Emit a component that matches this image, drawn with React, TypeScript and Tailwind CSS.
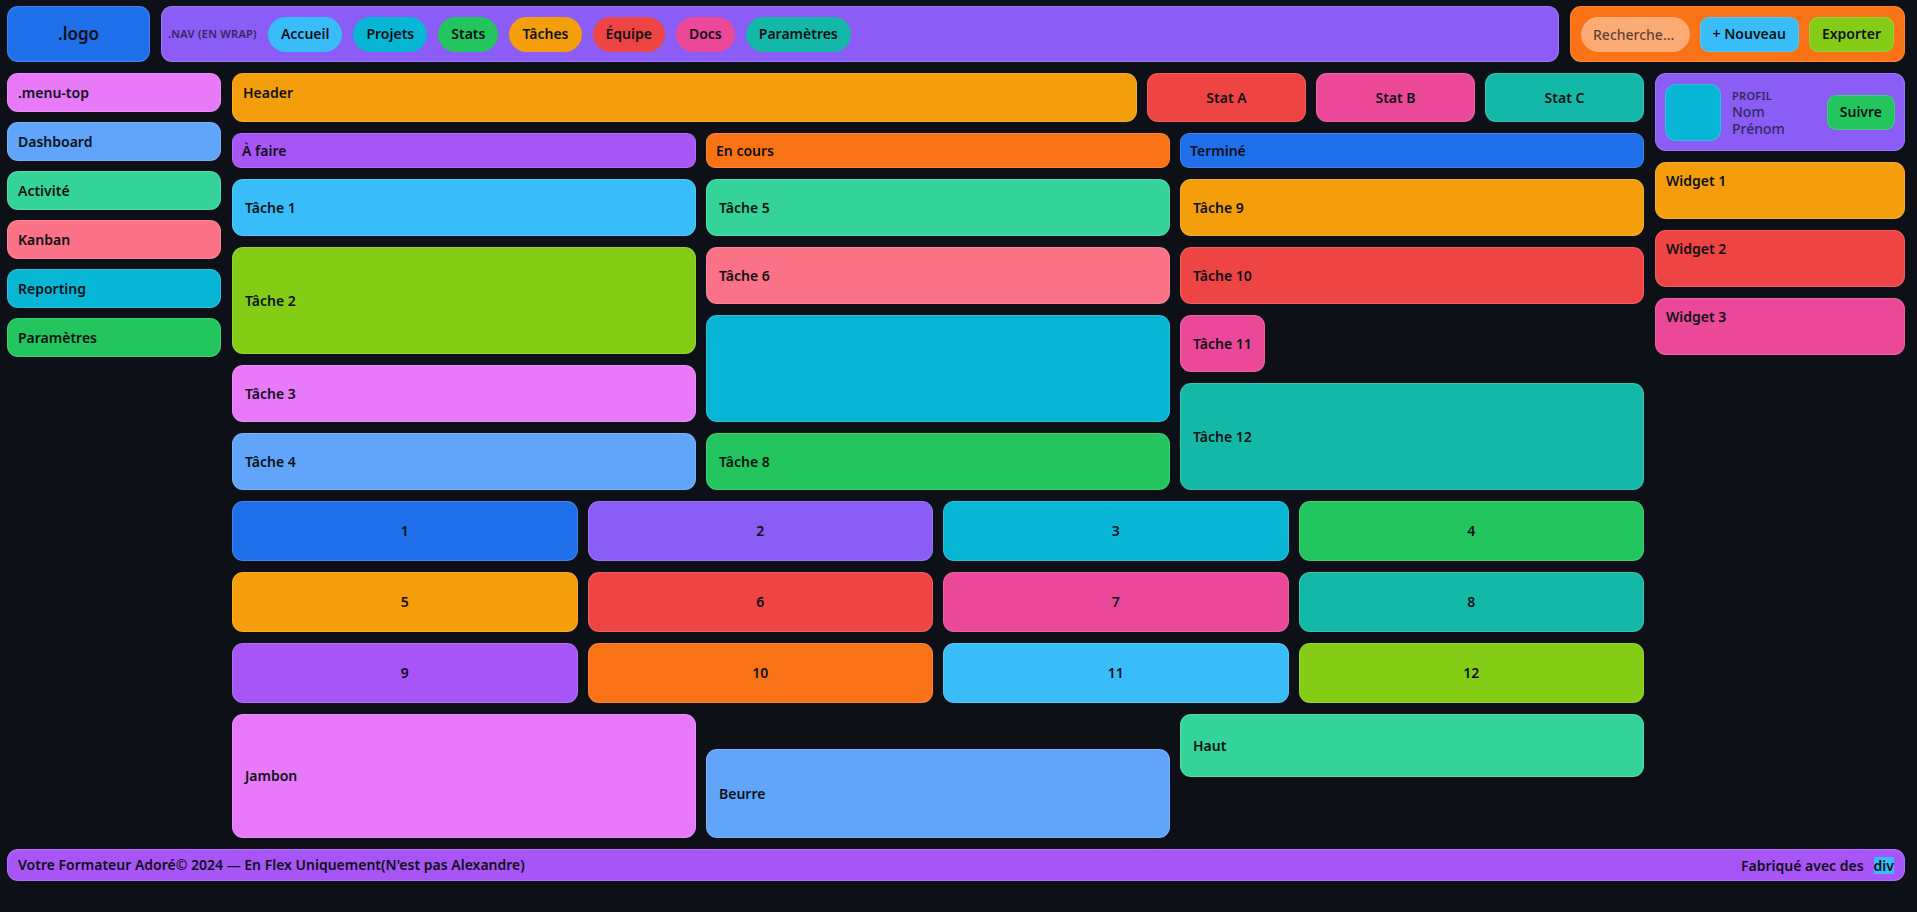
const BOX = 'rounded-[11px] border border-white/15';

const NAV_LINKS = [
  { label: 'Accueil', color: 'bg-[#38bdf8]' },
  { label: 'Projets', color: 'bg-[#06b6d4]' },
  { label: 'Stats', color: 'bg-[#22c55e]' },
  { label: 'Tâches', color: 'bg-[#f59e0b]' },
  { label: 'Équipe', color: 'bg-[#ef4444]' },
  { label: 'Docs', color: 'bg-[#ec4899]' },
  { label: 'Paramètres', color: 'bg-[#14b8a6]' },
];

const MENU_LINKS = [
  { label: 'Dashboard', color: 'bg-[#60a5fa]' },
  { label: 'Activité', color: 'bg-[#34d399]' },
  { label: 'Kanban', color: 'bg-[#fb7185]' },
  { label: 'Reporting', color: 'bg-[#06b6d4]' },
  { label: 'Paramètres', color: 'bg-[#22c55e]' },
];

const STATS = [
  { label: 'Stat A', color: 'bg-[#ef4444]' },
  { label: 'Stat B', color: 'bg-[#ec4899]' },
  { label: 'Stat C', color: 'bg-[#14b8a6]' },
];

type Task = { label: string; color: string; tall?: boolean; narrow?: boolean };

const COLUMNS: { title: string; color: string; tasks: Task[] }[] = [
  {
    title: 'À faire',
    color: 'bg-[#a855f7]',
    tasks: [
      { label: 'Tâche 1', color: 'bg-[#38bdf8]' },
      { label: 'Tâche 2', color: 'bg-[#84cc16]', tall: true },
      { label: 'Tâche 3', color: 'bg-[#e879f9]' },
      { label: 'Tâche 4', color: 'bg-[#60a5fa]' },
    ],
  },
  {
    title: 'En cours',
    color: 'bg-[#f97316]',
    tasks: [
      { label: 'Tâche 5', color: 'bg-[#34d399]' },
      { label: 'Tâche 6', color: 'bg-[#fb7185]' },
      { label: '', color: 'bg-[#06b6d4]', tall: true },
      { label: 'Tâche 8', color: 'bg-[#22c55e]' },
    ],
  },
  {
    title: 'Terminé',
    color: 'bg-[#1f6feb]',
    tasks: [
      { label: 'Tâche 9', color: 'bg-[#f59e0b]' },
      { label: 'Tâche 10', color: 'bg-[#ef4444]' },
      { label: 'Tâche 11', color: 'bg-[#ec4899]', narrow: true },
      { label: 'Tâche 12', color: 'bg-[#14b8a6]', tall: true },
    ],
  },
];

const TILES = [
  'bg-[#1f6feb]',
  'bg-[#8b5cf6]',
  'bg-[#06b6d4]',
  'bg-[#22c55e]',
  'bg-[#f59e0b]',
  'bg-[#ef4444]',
  'bg-[#ec4899]',
  'bg-[#14b8a6]',
  'bg-[#a855f7]',
  'bg-[#f97316]',
  'bg-[#38bdf8]',
  'bg-[#84cc16]',
];

const WIDGETS = [
  { label: 'Widget 1', color: 'bg-[#f59e0b]' },
  { label: 'Widget 2', color: 'bg-[#ef4444]' },
  { label: 'Widget 3', color: 'bg-[#ec4899]' },
];

function TopBar() {
  return (
    <header className="flex gap-[11px]">
      <div className={`${BOX} flex h-14 w-[143px] items-center justify-center bg-[#1f6feb] text-[17px]`}>.logo</div>
      <nav className={`${BOX} flex flex-1 flex-wrap items-center gap-[11px] bg-[#8b5cf6] px-1.5`}>
        <span className="text-[11px] tracking-wide opacity-70">.NAV (EN WRAP)</span>
        {NAV_LINKS.map((link) => (
          <a key={link.label} href="#" className={`flex h-[35px] items-center rounded-full px-[13px] ${link.color}`}>
            {link.label}
          </a>
        ))}
      </nav>
      <div className={`${BOX} flex w-[335px] items-center gap-[10px] bg-[#f97316] px-[10px]`}>
        <input
          type="text"
          aria-label="Recherche"
          placeholder="Recherche…"
          className="h-[35px] min-w-0 flex-1 rounded-full bg-white/40 px-3 font-medium outline-none placeholder:text-[#0d1117]/70"
        />
        <button className="h-[35px] rounded-[9px] border border-white/15 bg-[#38bdf8] px-3">+ Nouveau</button>
        <button className="h-[35px] rounded-[9px] border border-white/15 bg-[#84cc16] px-3">Exporter</button>
      </div>
    </header>
  );
}

function SideMenu() {
  return (
    <aside className="flex w-[214px] shrink-0 flex-col gap-[10px]">
      <div className={`${BOX} flex h-[39px] items-center bg-[#e879f9] px-[10px]`}>.menu-top</div>
      {MENU_LINKS.map((link) => (
        <a key={link.label} href="#" className={`${BOX} flex h-[39px] items-center px-[10px] ${link.color}`}>
          {link.label}
        </a>
      ))}
    </aside>
  );
}

function Board() {
  return (
    <section className="grid grid-cols-3 gap-[10px]">
      {COLUMNS.map((column) => (
        <div key={column.title} className="flex flex-col items-stretch gap-[11px]">
          <h2 className={`flex h-[35px] items-center rounded-[9px] border border-white/15 px-[9px] ${column.color}`}>
            {column.title}
          </h2>
          {column.tasks.map((task) => (
            <div
              key={task.label}
              className={`${BOX} flex items-center px-3 ${task.color} ${task.tall ? 'h-[107px]' : 'h-[57px]'} ${
                task.narrow ? 'self-start' : ''
              }`}
            >
              {task.label}
            </div>
          ))}
        </div>
      ))}
    </section>
  );
}

function Main() {
  return (
    <main className="flex min-w-0 flex-1 flex-col gap-[11px]">
      <div className="flex h-[49px] gap-[10px]">
        <div className={`${BOX} flex-1 bg-[#f59e0b] px-[10px] py-[9px]`}>Header</div>
        {STATS.map((stat) => (
          <div key={stat.label} className={`${BOX} flex w-[159px] items-center justify-center ${stat.color}`}>
            {stat.label}
          </div>
        ))}
      </div>
      <Board />
      <section className="grid grid-cols-4 gap-x-[10px] gap-y-[11px]">
        {TILES.map((color, index) => (
          <div key={color} className={`${BOX} flex h-[60px] items-center justify-center ${color}`}>
            {index + 1}
          </div>
        ))}
      </section>
      <section className="grid h-[124px] grid-cols-3 gap-[10px]">
        <div className={`${BOX} flex items-center bg-[#e879f9] px-3`}>Jambon</div>
        <div className={`${BOX} flex h-[89px] items-center self-end bg-[#60a5fa] px-3`}>Beurre</div>
        <div className={`${BOX} flex h-[63px] items-center self-start bg-[#34d399] px-3`}>Haut</div>
      </section>
    </main>
  );
}

function RightPanel() {
  return (
    <aside className="flex w-[250px] shrink-0 flex-col gap-[11px]">
      <div className={`${BOX} flex h-[78px] items-center gap-[11px] bg-[#8b5cf6] px-[9px]`}>
        <div className={`${BOX} h-[57px] w-14 bg-[#06b6d4]`} />
        <div className="flex-1 leading-[17px] opacity-70">
          <div className="text-[11px] leading-[15px] tracking-wide">PROFIL</div>
          <div className="w-14 font-medium">Nom Prénom</div>
        </div>
        <button className="h-[35px] rounded-[9px] border border-white/15 bg-[#22c55e] px-3">Suivre</button>
      </div>
      {WIDGETS.map((widget) => (
        <div key={widget.label} className={`${BOX} h-[57px] px-[10px] py-2 ${widget.color}`}>
          {widget.label}
        </div>
      ))}
    </aside>
  );
}

export default function App() {
  return (
    <div className="flex min-h-screen flex-col gap-[11px] bg-[#0d1117] pt-1.5 pr-3 pb-8 pl-[7px] font-['Noto_Sans',sans-serif] text-sm font-semibold text-[#0d1117]">
      <TopBar />
      <div className="flex gap-[11px]">
        <SideMenu />
        <Main />
        <RightPanel />
      </div>
      <footer className={`${BOX} flex h-8 items-center justify-between bg-[#a855f7] px-[10px]`}>
        <span>Votre Formateur Adoré© 2024 — En Flex Uniquement(N'est pas Alexandre)</span>
        <span className="flex gap-[10px] leading-[17px]">
          Fabriqué avec des
          <span className="bg-[#38bdf8]">div</span>
        </span>
      </footer>
    </div>
  );
}
